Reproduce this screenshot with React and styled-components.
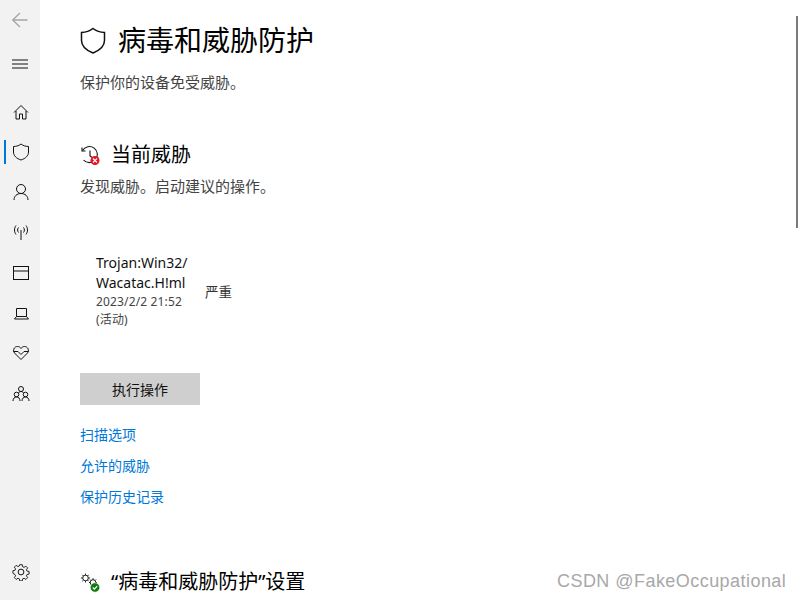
import styled, { createGlobalStyle } from "styled-components";

const GlobalStyle = createGlobalStyle`
  html, body {
    margin: 0;
    padding: 0;
    height: 100%;
    overflow: hidden;
    background: #fff;
  }
  * { box-sizing: border-box; }
`;

const Window = styled.div`
  position: relative;
  display: flex;
  width: 800px;
  height: 600px;
  overflow: hidden;
  font-family: "Noto Sans", "Noto Sans CJK SC", sans-serif;
  color: #000;
`;

const Sidebar = styled.nav`
  display: flex;
  flex-direction: column;
  flex: 0 0 40px;
  width: 40px;
  height: 600px;
  padding-bottom: 8px;
  background: #f2f2f2;
`;

const NavItem = styled.div`
  position: relative;
  display: flex;
  align-items: center;
  justify-content: center;
  width: 40px;
  height: 40px;
  padding-left: ${({ $flush }) => ($flush ? 0 : 1)}px;
  margin-top: ${({ $gap }) => $gap || 0}px;
  color: ${({ $muted }) => ($muted ? "#a6a6a6" : "#111")};

  ${({ $active }) =>
    $active &&
    `&::before {
      content: "";
      position: absolute;
      left: 4px;
      top: 8px;
      width: 2px;
      height: 24px;
      background: #0078d7;
    }`}
`;

const NavSpacer = styled.div`
  flex: 1;
`;

const Main = styled.main`
  flex: 1;
  padding: 20px 0 0 40px;
`;

const TitleRow = styled.div`
  display: flex;
  align-items: center;
  gap: 12px;
  height: 40px;
`;

const Title = styled.h1`
  margin: 0;
  font-size: 28px;
  font-weight: 400;
  line-height: 40px;
`;

const Subtitle = styled.p`
  margin: ${({ $top }) => $top}px 0 0;
  font-size: 15px;
  line-height: 20px;
  color: #444;
`;

const SectionRow = styled.div`
  display: flex;
  align-items: center;
  gap: 10px;
  height: 28px;
  margin-top: ${({ $top }) => $top}px;
`;

const SectionTitle = styled.h2`
  margin: 0;
  font-size: 20px;
  font-weight: 400;
  line-height: 28px;
`;

const Threat = styled.div`
  display: flex;
  align-items: center;
  margin: 57px 0 0 16px;
`;

const ThreatInfo = styled.div`
  width: 109px;
`;

const ThreatName = styled.div`
  font-size: 14px;
  line-height: 20px;
  color: #111;
`;

const ThreatMeta = styled.div`
  font-size: 12px;
  line-height: 18px;
  letter-spacing: 0.15px;
  color: #444;
`;

const Severity = styled.div`
  font-size: 13.5px;
  color: #333;
`;

const ActionButton = styled.button`
  display: block;
  width: 120px;
  height: 32px;
  margin: 44px 0 20px;
  padding: 0;
  border: 0;
  background: #cfcfcf;
  color: #111;
  font: inherit;
  font-size: 14px;
`;

const LinkList = styled.div`
  display: flex;
  flex-direction: column;
  gap: 11px;
`;

const Link = styled.a`
  font-size: 14px;
  line-height: 20px;
  color: #0078d7;
`;

const Scrollbar = styled.div`
  position: absolute;
  right: 2px;
  top: 16px;
  width: 2px;
  height: 212px;
  background: #7a7a7a;
`;

const Watermark = styled.div`
  position: absolute;
  left: 557px;
  top: 569px;
  font-family: "Liberation Sans", sans-serif;
  font-size: 18px;
  line-height: 24px;
  color: #a8a8a8;
  letter-spacing: 0.45px;
`;

const Icon = ({ children }) => (
  <svg width="20" height="20" viewBox="0 0 20 20" fill="none" stroke="currentColor" strokeWidth="1">
    {children}
  </svg>
);

const GearIcon = () => (
  <svg width="18" height="18" viewBox="0 0 20 20" fill="none" stroke="currentColor" strokeWidth="1.1">
    <circle cx="10" cy="10" r="3.2" />
    <path d="M8.4 1h3.200l.5 2.600 1.700.7 2.200-1.500 2.200 2.200-1.500 2.200.7 1.700 2.600.5v3.200l-2.600.5-.7 1.700 1.500 2.200-2.200 2.200-2.200-1.500-1.700.7-.5 2.600H8.400l-.5-2.600-1.700-.7-2.200 1.500-2.200-2.200 1.500-2.200-.7-1.700L0 11.600V8.400l2.600-.5.7-1.700-1.500-2.200L4 1.800l2.200 1.500 1.700-.7z" transform="translate(1 1) scale(.9)" />
  </svg>
);

export default function App() {
  return (
    <>
      <GlobalStyle />
      <Window>
        <Sidebar>
          <NavItem $muted $flush>
            <Icon>
              <path d="M2.500 10h15M10 3l-7.300 7 7.300 7" strokeWidth="1.300" />
            </Icon>
          </NavItem>
          <NavItem $gap={4} $flush>
            <Icon>
              <path d="M2 6h16M2 10h16M2 14h16" />
            </Icon>
          </NavItem>
          <NavItem $gap={8}>
            <Icon>
              <path d="M3 10.500 10 3.500l7 7M5 9v8h3.500v-5h3v5H15V9" />
            </Icon>
          </NavItem>
          <NavItem $active>
            <Icon>
              <path d="M10 2c2 1.600 4.400 2.400 7.500 2.500v5.500c0 3.800-2.800 6.400-7.500 8-4.700-1.600-7.500-4.200-7.500-8V4.500C5.600 4.400 8 3.600 10 2z" />
            </Icon>
          </NavItem>
          <NavItem>
            <Icon>
              <circle cx="10" cy="7" r="4.500" />
              <path d="M3 18c0-4 3-6.500 7-6.500s7 2.500 7 6.500" />
            </Icon>
          </NavItem>
          <NavItem>
            <Icon>
              <path d="M10 8v10" />
              <path d="M7.500 5.500c-1.200 1.500-1.200 3.500 0 5M12.500 5.500c1.200 1.500 1.200 3.500 0 5M5 3.500c-2 2.800-2 6.200 0 9M15 3.500c2 2.800 2 6.200 0 9" />
            </Icon>
          </NavItem>
          <NavItem>
            <Icon>
              <rect x="2.500" y="4.500" width="15" height="13" />
              <path d="M2.500 9h15" />
            </Icon>
          </NavItem>
          <NavItem>
            <Icon>
              <path d="M5.500 6.500h10v8h-10zM5.500 14.500l-2 2.500h14l-2-2.500" />
            </Icon>
          </NavItem>
          <NavItem>
            <Icon>
              <path d="M10 17.500 3.500 11C1.500 8.500 3 4.500 6.500 4.500c1.500 0 2.700.7 3.500 2 .8-1.300 2-2 3.500-2 3.500 0 5 4 3 6.500z" />
              <path d="M2.500 9.500H7l3 3 3-3h4.500" />
            </Icon>
          </NavItem>
          <NavItem $gap={2}>
            <Icon>
              <circle cx="10" cy="5" r="2.500" />
              <circle cx="5.500" cy="10.500" r="2.300" />
              <circle cx="14.500" cy="10.500" r="2.300" />
              <path d="M2 17c0-2.500 1.500-4 3.500-4s3.500 1.500 3.500 4M11 17c0-2.500 1.500-4 3.500-4s3.500 1.500 3.500 4M7.500 9c.5-1 1.500-1.500 2.500-1.500s2 .5 2.500 1.500" />
            </Icon>
          </NavItem>
          <NavSpacer />
          <NavItem>
            <GearIcon />
          </NavItem>
        </Sidebar>
        <Main>
          <TitleRow>
            <svg width="26" height="27" viewBox="0 0 26 27" fill="none" stroke="#111" strokeWidth="1.500">
              <path d="M13 1.500c3.500 2.800 7 3.900 11.500 4v8c0 5.500-4 9.500-11.500 12.500C5.500 23 1.500 19 1.500 13.500v-8c4.500-.1 8-1.200 11.500-4z" />
            </svg>
            <Title>病毒和威胁防护</Title>
          </TitleRow>
          <Subtitle $top={12}>保护你的设备免受威胁。</Subtitle>
          <SectionRow $top={49}>
            <svg width="21" height="21" viewBox="0 0 21 21" fill="none" stroke="#111" strokeWidth="1.100">
              <path d="M2.500 5.500A8 8 0 1 1 3.500 15" />
              <path d="M2 2.500v3.500h3.500M10 5.500V11l3 2" />
              <circle cx="15" cy="15.500" r="4.500" fill="#e81123" stroke="none" />
              <path d="M13 13.500l4 4M17 13.500l-4 4" stroke="#fff" strokeWidth="1.200" />
            </svg>
            <SectionTitle>当前威胁</SectionTitle>
          </SectionRow>
          <Subtitle $top={7}>发现威胁。启动建议的操作。</Subtitle>
          <Threat>
            <ThreatInfo>
              <ThreatName>Trojan:Win32/</ThreatName>
              <ThreatName>Wacatac.H!ml</ThreatName>
              <ThreatMeta>2023/2/2 21:52</ThreatMeta>
              <ThreatMeta>(活动)</ThreatMeta>
            </ThreatInfo>
            <Severity>严重</Severity>
          </Threat>
          <ActionButton>执行操作</ActionButton>
          <LinkList>
            <Link>扫描选项</Link>
            <Link>允许的威胁</Link>
            <Link>保护历史记录</Link>
          </LinkList>
          <SectionRow $top={61}>
            <svg width="21" height="21" viewBox="0 0 21 21" fill="none" stroke="#222" strokeWidth="1">
              <circle cx="5.500" cy="6" r="2.800" />
              <path d="M5.500 1.500v1.700M5.500 8.800v1.700M1 6h1.700M8.300 6H10M2.300 2.800l1.200 1.200M7.500 8l1.200 1.200M2.300 9.200 3.500 8M7.500 4l1.200-1.200" />
              <circle cx="13" cy="10.500" r="2.800" />
              <path d="M13 6.200v1.500M9 10.500h1.500M16 7.500l-1 1M10 7.500l1 1M16.900 10.500h-1.400" />
              <circle cx="15" cy="15.500" r="4.700" fill="#107c10" stroke="#fff" strokeWidth="0.600" />
              <path d="M12.800 15.500l1.600 1.600 2.800-3" stroke="#fff" strokeWidth="1.200" />
            </svg>
            <SectionTitle>“病毒和威胁防护”设置</SectionTitle>
          </SectionRow>
        </Main>
        <Scrollbar />
        <Watermark>CSDN @FakeOccupational</Watermark>
      </Window>
    </>
  );
}
